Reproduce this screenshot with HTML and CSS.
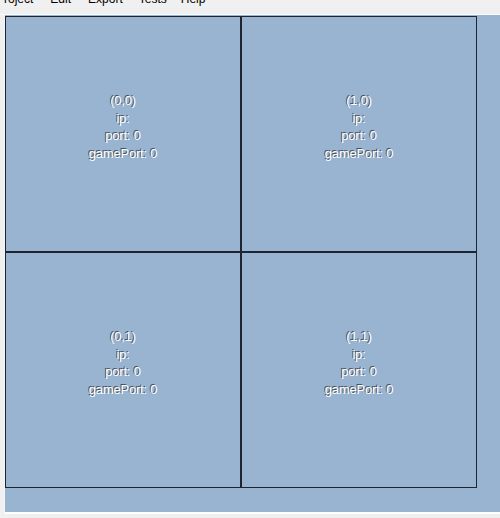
FILE: index.html
```html
<!DOCTYPE html>
<html>
<head>
<meta charset="utf-8">
<link rel="stylesheet" href="styles.css">
</head>
<body>
<div class="menubar">
  <span class="menu-item m-project">Project</span>
  <span class="menu-item m-edit">Edit</span>
  <span class="menu-item m-export">Export</span>
  <span class="menu-item m-tests">Tests</span>
  <span class="menu-item m-help">Help</span>
</div>
<div class="panel">
  <div class="grid">
    <div class="cell"><div class="label"><div>(0,0)</div><div>ip:</div><div>port: 0</div><div>gamePort: 0</div></div></div>
    <div class="cell"><div class="label"><div>(1,0)</div><div>ip:</div><div>port: 0</div><div>gamePort: 0</div></div></div>
    <div class="cell"><div class="label"><div>(0,1)</div><div>ip:</div><div>port: 0</div><div>gamePort: 0</div></div></div>
    <div class="cell"><div class="label"><div>(1,1)</div><div>ip:</div><div>port: 0</div><div>gamePort: 0</div></div></div>
  </div>
</div>
</body>
</html>
```
FILE: styles.css
```css
html, body {
  margin: 0;
  padding: 0;
  background: #f0f0f0;
  width: 500px;
  height: 518px;
  overflow: hidden;
}

.menubar {
  height: 14px;
  overflow: hidden;
  display: flex;
  align-items: flex-start;
  background: #f0f0f0;
  border-bottom: 1px solid #fbfbfb;
  font-family: "Liberation Sans", Arial, sans-serif;
  font-size: 12px;
  line-height: 16px;
  color: #000;
}

.menu-item {
  margin-top: -9px;
  white-space: nowrap;
}

.m-project { margin-left: -4px; }
.m-edit { margin-left: 17px; }
.m-export { margin-left: 17px; }
.m-tests { margin-left: 16px; }
.m-help { margin-left: 14px; }

.panel {
  margin-left: 4px;
  height: 497px;
  background: #99b4d1;
  border-left: 1px solid #f4f4f4;
  border-bottom: 2px solid #ffffff;
}

.grid {
  display: grid;
  grid-template-columns: 236px 236px;
  grid-template-rows: 236px 236px;
  padding-top: 1px;
}

.cell {
  box-sizing: border-box;
  border: 1px solid #1e2530;
  display: flex;
  align-items: center;
  justify-content: center;
}

.label {
  margin-bottom: 14px;
  text-align: center;
  font-family: "Liberation Sans", Arial, sans-serif;
  font-size: 13px;
  line-height: 17.5px;
  letter-spacing: -0.2px;
  color: #ffffff;
  text-shadow: -1px -1px 0 #4a4f57;
}
```
